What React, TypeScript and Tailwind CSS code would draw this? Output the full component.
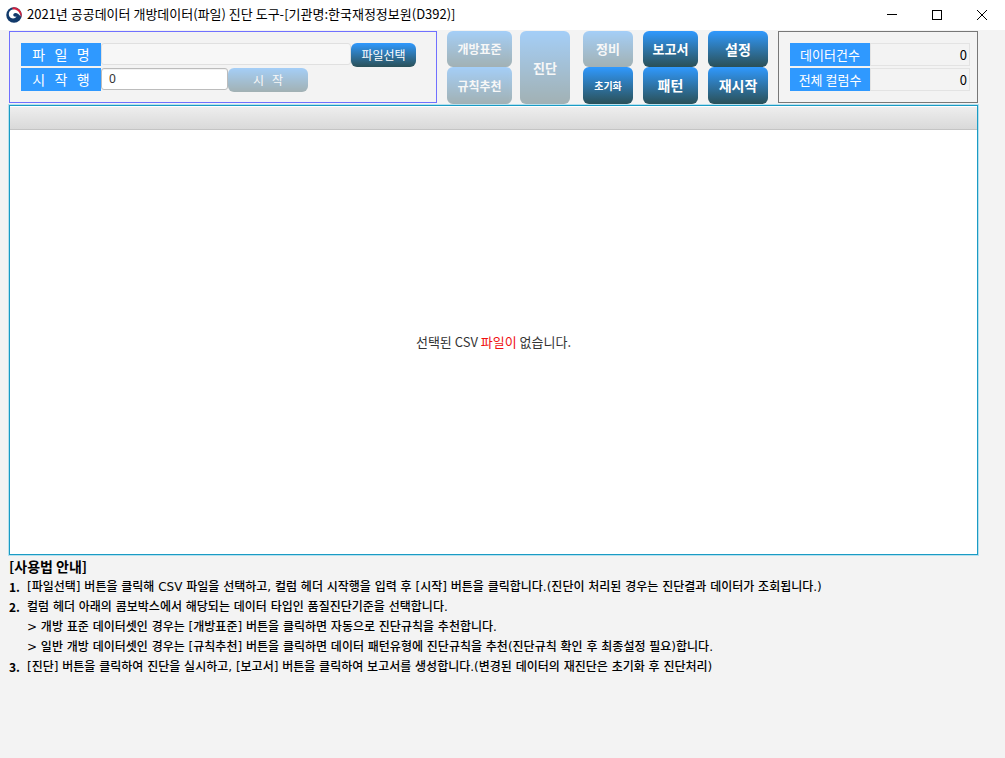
import { useState } from "react";
import type { ReactNode } from "react";

const activeFill =
  "bg-linear-to-b from-[#2f99ff] to-[#2a5058] text-white";
const buttonBase =
  "flex items-center justify-center rounded-md whitespace-pre disabled:opacity-40";

type ToolButtonProps = {
  children: ReactNode;
  className: string;
  disabled?: boolean;
};

function ToolButton({ children, className, disabled }: ToolButtonProps) {
  return (
    <button
      type="button"
      disabled={disabled}
      className={`${buttonBase} ${activeFill} font-bold ${className}`}
    >
      {children}
    </button>
  );
}

function TitleBar() {
  return (
    <header className="flex h-[30px] items-center bg-white pl-1.5 text-black">
      <svg viewBox="0 0 32 32" className="size-4 shrink-0" aria-hidden="true">
        <circle cx="16" cy="16" r="15.5" fill="#123a6b" />
        <path d="M13 .8 A15.5 15.5 0 0 1 30.5 21 C29 13 24 6 13 5Z" fill="#d5203c" />
        <path d="M8 8 C14 2 28 5 29 19 C25 12 18 10 15 14 C13 18 17 20 21 19 C18 25 8 24 6 17 C5 13 6 10 8 8Z" fill="#ffffff" />
      </svg>
      <h1 className="ml-[5px] pb-0.5 text-[13px]">
        2021년 공공데이터 개방데이터(파일) 진단 도구-[기관명:한국재정정보원(D392)]
      </h1>
      <div className="ml-auto flex h-full">
        <button type="button" aria-label="최소화" className="flex w-[45px] items-center justify-center">
          <svg viewBox="0 0 10 10" className="size-2.5" stroke="currentColor" fill="none" shapeRendering="crispEdges">
            <path d="M0 4.5H10" />
          </svg>
        </button>
        <button type="button" aria-label="최대화" className="flex w-[45px] items-center justify-center">
          <svg viewBox="0 0 10 10" className="size-2.5" stroke="currentColor" fill="none" shapeRendering="crispEdges">
            <path d="M.5 .5H9.5V9.5H.5Z" />
          </svg>
        </button>
        <button type="button" aria-label="닫기" className="flex w-[46px] items-center justify-center">
          <svg viewBox="0 0 10 10" className="size-2.5" stroke="currentColor" fill="none">
            <path d="M0 0L10 10M10 0L0 10" />
          </svg>
        </button>
      </div>
    </header>
  );
}

const fieldLabel =
  "flex h-[23px] w-20 shrink-0 items-center justify-center whitespace-pre bg-[#2f99ff] text-white";

function FilePanel() {
  const [startRow, setStartRow] = useState("0");
  return (
    <section className="flex h-[72px] w-[428px] flex-col gap-px border border-[#7070ff] pt-[11px] pl-[11px]">
      <div className="flex h-6 items-start">
        <label htmlFor="file-name" className={`${fieldLabel} text-[14px]`}>파   일   명</label>
        <input
          id="file-name"
          readOnly
          className="h-[22px] w-[250px] rounded-[3px] border border-[#e0e0e0] bg-[#f7f7f7] px-2 text-[12px]"
        />
        <button type="button" className={`${buttonBase} ${activeFill} h-6 w-[65px] text-[12px]`}>
          파일선택
        </button>
      </div>
      <div className="flex h-6 items-start">
        <label htmlFor="start-row" className={`${fieldLabel} text-[14px]`}>시   작   행</label>
        <input
          id="start-row"
          value={startRow}
          onChange={(e) => setStartRow(e.target.value)}
          className="h-[22px] w-[127px] rounded-[3px] border border-[#bcbcbc] bg-white px-[7px] pb-0.5 font-['Noto_Sans',sans-serif] text-[12px] text-[#333] inset-shadow-2xs"
        />
        <button type="button" disabled className={`${buttonBase} ${activeFill} h-6 w-20 text-[12px]`}>
          시   작
        </button>
      </div>
    </section>
  );
}

function StatsPanel() {
  return (
    <section className="flex h-[72px] w-[200px] flex-col gap-0.5 border border-[#777] pt-[11px] pl-[11px] text-[13px]">
      {["데이터건수", "전체 컬럼수"].map((name) => (
        <div key={name} className="flex">
          <span className={fieldLabel}>{name}</span>
          <output
            aria-label={name}
            className="flex h-[23px] w-[100px] items-center justify-end border border-[#e3e3e3] pr-0.5 text-black"
          >
            0
          </output>
        </div>
      ))}
    </section>
  );
}

function Toolbar() {
  return (
    <div className="flex items-start gap-2.5">
      <FilePanel />
      <div className="flex h-[73px] gap-[13px]">
        <div className="flex gap-2">
          <div className="flex w-[65px] flex-col">
            <ToolButton disabled className="h-9 text-[12px]">개방표준</ToolButton>
            <ToolButton disabled className="flex-1 text-[12px]">규칙추천</ToolButton>
          </div>
          <ToolButton disabled className="w-[50px] text-[13px]">진단</ToolButton>
        </div>
        <div className="flex gap-2.5">
          <div className="flex w-[50px] flex-col">
            <ToolButton disabled className="h-9 text-[13px]">정비</ToolButton>
            <ToolButton className="flex-1 text-[10px]">초기화</ToolButton>
          </div>
          <div className="flex w-[55px] flex-col">
            <ToolButton className="h-9 text-[13px]">보고서</ToolButton>
            <ToolButton className="flex-1 text-[14px]">패턴</ToolButton>
          </div>
          <div className="flex w-[60px] flex-col">
            <ToolButton className="h-9 text-[14px]">설정</ToolButton>
            <ToolButton className="flex-1 text-[14px]">재시작</ToolButton>
          </div>
        </div>
      </div>
      <StatsPanel />
    </div>
  );
}

function DataView() {
  return (
    <section className="mt-px flex min-h-[450px] flex-col border border-[#1a9bc4] bg-white shadow-[0_0_0_1px_#b5e0ee]">
      <div className="h-6 border-t border-b border-t-white border-b-[#c4c4c4] bg-linear-to-b from-[#eeeeee] to-[#d9d9d9]" />
      <p className="flex flex-1 items-center justify-center whitespace-pre text-[13px] text-[#333]">
        선택된 CSV <span className="text-[#f01010]">파일이</span> 없습니다.
      </p>
    </section>
  );
}

const stepNumber =
  "w-[18px] shrink-0 font-['Noto_Sans_CJK_KR',sans-serif] font-bold";

function Guide() {
  return (
    <section className="pt-px font-['DejaVu_Sans','Noto_Sans_CJK_KR',sans-serif] text-[12px] leading-5 font-medium text-black">
      <h2 className="mb-px font-['Noto_Sans_CJK_KR',sans-serif] text-[14px] leading-5 font-bold">[사용법 안내]</h2>
      <ol>
        <li className="flex">
          <span className={stepNumber}>1.</span>
          <p>[파일선택] 버튼을 클릭해 CSV 파일을 선택하고, 컬럼 헤더 시작행을 입력 후 [시작] 버튼을 클릭합니다.(진단이 처리된 경우는 진단결과 데이터가 조회됩니다.)</p>
        </li>
        <li className="flex">
          <span className={stepNumber}>2.</span>
          <div>
            <p>컬럼 헤더 아래의 콤보박스에서 해당되는 데이터 타입인 품질진단기준을 선택합니다.</p>
            <p>&gt; 개방 표준 데이터셋인 경우는 [개방표준] 버튼을 클릭하면 자동으로 진단규칙을 추천합니다.</p>
            <p>&gt; 일반 개방 데이터셋인 경우는 [규칙추천] 버튼을 클릭하면 데이터 패턴유형에 진단규칙을 추천(진단규칙 확인 후 최종설정 필요)합니다.</p>
          </div>
        </li>
        <li className="flex">
          <span className={stepNumber}>3.</span>
          <p>[진단] 버튼을 클릭하여 진단을 실시하고, [보고서] 버튼을 클릭하여 보고서를 생성합니다.(변경된 데이터의 재진단은 초기화 후 진단처리)</p>
        </li>
      </ol>
    </section>
  );
}

export default function App() {
  return (
    <div className="min-h-screen bg-[#f3f3f3] font-['Noto_Sans_CJK_KR',sans-serif]">
      <TitleBar />
      <main className="pt-px pr-[27px] pl-[9px]">
        <Toolbar />
        <DataView />
        <Guide />
      </main>
    </div>
  );
}
